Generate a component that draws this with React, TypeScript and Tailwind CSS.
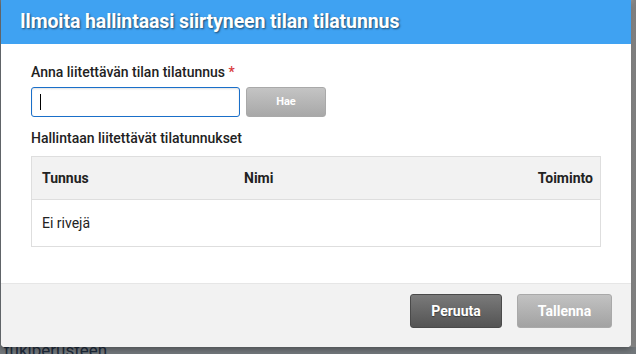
import React from "react";

export default function App() {
  return (
    <div
      className="relative w-[636px] h-[354px] overflow-hidden bg-[#72777b]"
      style={{ fontFamily: "Roboto, 'Liberation Sans', sans-serif" }}
    >
      {/* Page behind the overlay */}
      <div className="absolute left-[4px] top-[340px] text-[17px] leading-[20px] text-[#1d2a3a]">tukiperusteen</div>
      <div className="absolute left-[628px] top-[310px] w-[8px] h-[1px] bg-[#3a6ea8]" />
      <div className="absolute left-[630px] top-[322px] text-[16px] text-[#1d2a3a]">t</div>
      <div className="absolute right-0 top-0 w-[6px] h-[347px] bg-gradient-to-r from-[#9a9a9a] to-[#7f7f7f]" />

      {/* Dialog */}
      <div className="absolute left-[1px] top-0 w-[630px] h-[347px] flex flex-col bg-white rounded-b-[4px] overflow-hidden shadow-[0_2px_6px_rgba(0,0,0,0.35)]">
        <div className="h-[44px] bg-[#3fa2f2] flex items-center px-[19px] shrink-0">
          <h1
            className="text-white text-[19.5px] font-bold tracking-[-0.1px]"
            style={{ textShadow: "1px 1px 2px rgba(0,0,0,0.55)" }}
          >
            Ilmoita hallintaasi siirtyneen tilan tilatunnus
          </h1>
        </div>

        <div className="flex-1 px-[30px] pt-[19px] text-[#222]">
          <label className="block text-[14px] font-medium leading-[18px]">
            Anna liitettävän tilan tilatunnus <span className="text-[#d9383a]">*</span>
          </label>
          <div className="flex items-center gap-[6px] mt-[6px]">
            <div className="w-[209px] h-[30px] border border-[#1a6fc9] rounded-[3px] flex items-center pl-[8px] shadow-[inset_0_1px_2px_rgba(0,0,0,0.12)]">
              <div className="w-[1px] h-[16px] bg-black" />
            </div>
            <button className="w-[80px] h-[30px] rounded-[3px] border border-[#a9a9a9] bg-gradient-to-b from-[#c4c4c4] to-[#a8a8a8] text-white text-[11px] font-bold">
              Hae
            </button>
          </div>
          <div className="mt-[12px] text-[14px] font-medium leading-[18px]">
            Hallintaan liitettävät tilatunnukset
          </div>

          <div className="mt-[9px] border border-[#dedede]">
            <div className="h-[43px] bg-[#f2f2f2] border-b border-[#dedede] flex items-center pl-[10px] pr-[7px] text-[14px] font-bold">
              <div className="w-[202px]">Tunnus</div>
              <div className="flex-1">Nimi</div>
              <div>Toiminto</div>
            </div>
            <div className="h-[46px] flex items-center px-[10px] text-[14px]">Ei rivejä</div>
          </div>
        </div>

        <div className="h-[64px] bg-[#f2f2f2] border-t border-[#e6e6e6] flex items-start justify-end gap-[15px] pt-[10px] pr-[19px] shrink-0">
          <button
            className="w-[92px] h-[34px] rounded-[3px] border border-[#4a4a4a] bg-gradient-to-b from-[#7a7a7a] to-[#545454] text-white text-[14px] font-bold"
            style={{ textShadow: "0 1px 1px rgba(0,0,0,0.4)" }}
          >
            Peruuta
          </button>
          <button className="w-[95px] h-[34px] rounded-[3px] border border-[#a9a9a9] bg-gradient-to-b from-[#c2c2c2] to-[#a2a2a2] text-white text-[14px] font-bold">
            Tallenna
          </button>
        </div>
      </div>
    </div>
  );
}
